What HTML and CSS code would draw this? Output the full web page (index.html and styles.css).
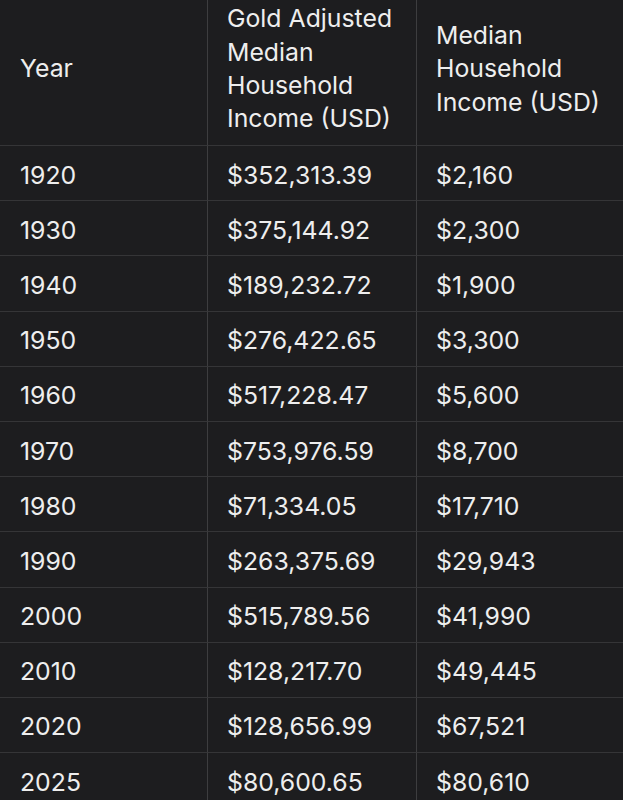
FILE: index.html
```html
<!DOCTYPE html>
<html>
<head>
<meta charset="utf-8">
<link rel="stylesheet" href="styles.css">
</head>
<body>
<div class="table">
  <div class="cell head">Year</div>
  <div class="cell head">Gold Adjusted Median Household Income (USD)</div>
  <div class="cell head">Median Household Income (USD)</div>

  <div class="cell">1920</div><div class="cell">$352,313.39</div><div class="cell">$2,160</div>
  <div class="cell">1930</div><div class="cell">$375,144.92</div><div class="cell">$2,300</div>
  <div class="cell">1940</div><div class="cell">$189,232.72</div><div class="cell">$1,900</div>
  <div class="cell">1950</div><div class="cell">$276,422.65</div><div class="cell">$3,300</div>
  <div class="cell">1960</div><div class="cell">$517,228.47</div><div class="cell">$5,600</div>
  <div class="cell">1970</div><div class="cell">$753,976.59</div><div class="cell">$8,700</div>
  <div class="cell">1980</div><div class="cell">$71,334.05</div><div class="cell">$17,710</div>
  <div class="cell">1990</div><div class="cell">$263,375.69</div><div class="cell">$29,943</div>
  <div class="cell">2000</div><div class="cell">$515,789.56</div><div class="cell">$41,990</div>
  <div class="cell">2010</div><div class="cell">$128,217.70</div><div class="cell">$49,445</div>
  <div class="cell">2020</div><div class="cell">$128,656.99</div><div class="cell">$67,521</div>
  <div class="cell">2025</div><div class="cell">$80,600.65</div><div class="cell">$80,610</div>
</div>
</body>
</html>
```
FILE: styles.css
```css
html, body {
  margin: 0;
  padding: 0;
  background: #1d1d1f;
  overflow: hidden;
}
.table {
  display: grid;
  grid-template-columns: 207px 209px 207px;
  grid-template-rows: 146px;
  grid-auto-rows: 55.2px;
  width: 623px;
  font-family: Inter, "Liberation Sans", sans-serif;
  font-size: 24.8px;
  color: #eeeeee;
}
.cell {
  box-sizing: border-box;
  display: flex;
  align-items: center;
  padding-left: 20px;
  padding-top: 3px;
  border-bottom: 1px solid #353537;
  white-space: nowrap;
}
.cell:nth-child(3n+2),
.cell:nth-child(3n) {
  border-left: 1px solid #3d3d3f;
  padding-left: 19px;
}
.head {
  white-space: normal;
  line-height: 33.4px;
  padding-top: 0;
  padding-bottom: 7px;
  padding-right: 8px;
}
```
